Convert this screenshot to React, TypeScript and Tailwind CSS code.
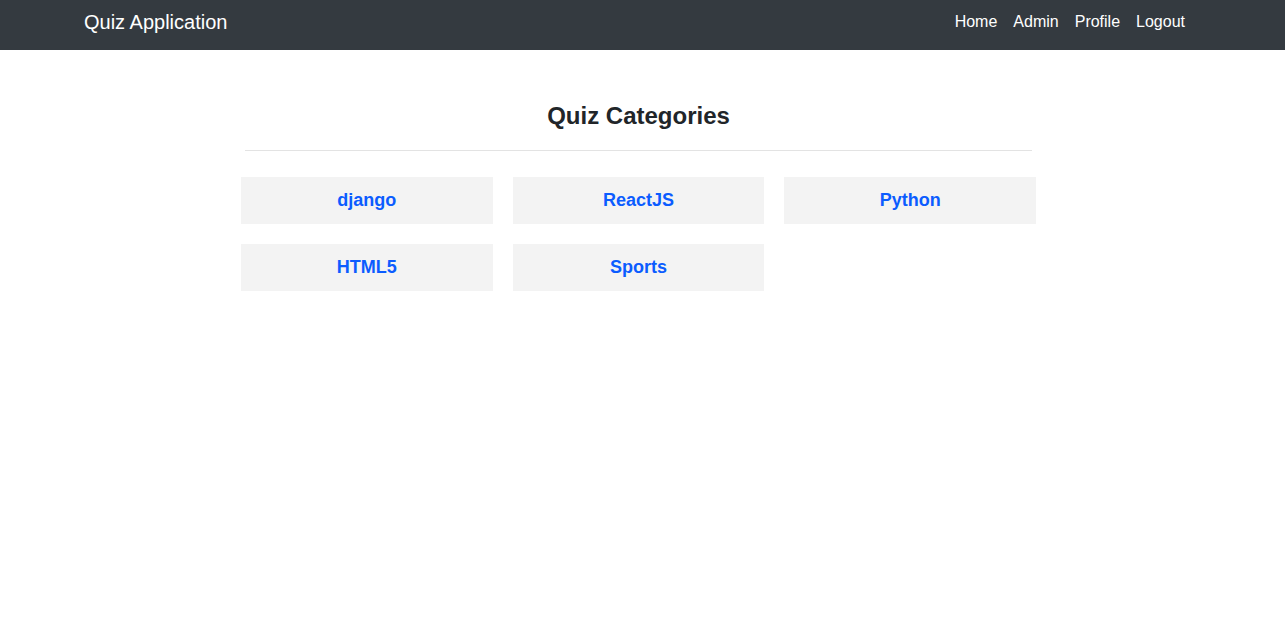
import React from 'react';

const categories = ['django', 'ReactJS', 'Python', 'HTML5', 'Sports'];
const links = ['Home', 'Admin', 'Profile', 'Logout'];

const App = () => {
  return (
    <div className="min-h-screen bg-white font-['Liberation_Sans',Arial,sans-serif]">
      <nav className="h-[50px] bg-[#343a40] flex items-center justify-between pl-[84px] pr-[100px] pb-[6px]">
        <span className="text-[20px] text-white">Quiz Application</span>
        <div className="flex gap-4">
          {links.map((link) => (
            <a key={link} href="#" className="text-[16px] text-white">
              {link}
            </a>
          ))}
        </div>
      </nav>

      <div className="ml-[241px] w-[795px] pt-[48px]">
        <h2 className="text-center text-[24px] font-bold text-[#212529] leading-[36px]">
          Quiz Categories
        </h2>
        <hr className="mx-1 mt-[16px] border-t border-[#e3e3e3]" />
        <div className="grid grid-cols-3 gap-x-5 gap-y-5 mt-[26px]">
          {categories.map((cat) => (
            <div key={cat} className="h-[47px] bg-[#f3f3f3] flex items-center justify-center">
              <a href="#" className="text-[18px] font-bold text-[#0b5cff]">
                {cat}
              </a>
            </div>
          ))}
        </div>
      </div>
    </div>
  );
};

export default App;
